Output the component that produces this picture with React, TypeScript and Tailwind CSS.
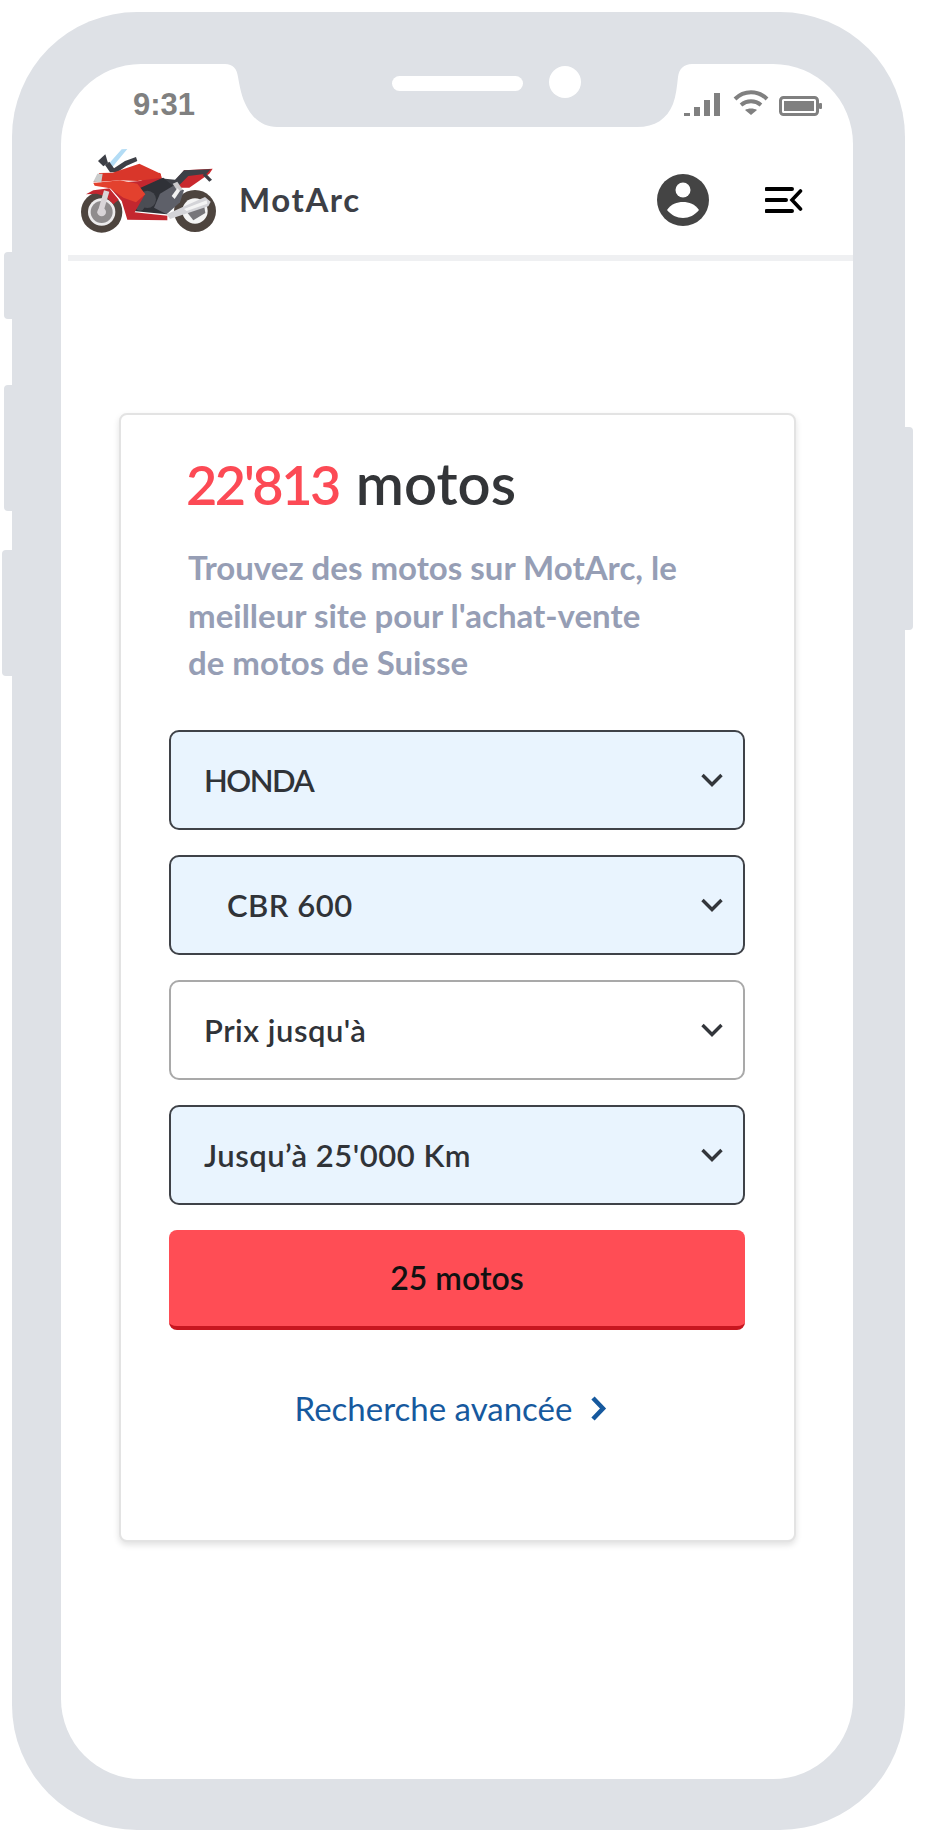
// Phone mockup: MotArc motorcycle search
import React from 'react';

const Chevron: React.FC = () => (
  <svg className="w-[24px] h-[16px] shrink-0" viewBox="0 0 24 16" fill="none">
    <path d="M2.5 3 L12 12.5 L21.5 3" stroke="#33363b" strokeWidth="3.4" />
  </svg>
);

const BikeLogo: React.FC = () => (
  <svg className="w-[137px] h-[87px] shrink-0 mb-[22px]" viewBox="60 45 411 261">
    {/* rear wheel */}
    <circle cx="405" cy="240" r="63" fill="#4d443e" />
    <circle cx="405" cy="240" r="38" fill="#f4f4f4" />
    <path d="M378 240 L432 222 L436 246 L400 268 Z" fill="#77767a" />
    {/* front wheel */}
    <circle cx="125" cy="243" r="62" fill="#4d443e" />
    <circle cx="125" cy="243" r="41" fill="#ecebec" />
    <circle cx="125" cy="243" r="33" fill="#8f8c8d" />
    <circle cx="125" cy="243" r="13" fill="#d8d4d7" />
    {/* tail and seat */}
    <path d="M352 142 L372 118 L458 113 L448 128 L388 170 L352 170 Z" fill="#c9282e" />
    <path d="M300 142 L345 146 L372 118 L452 115 L440 128 L385 135 L350 170 L295 170 Z" fill="#3d3f46" />
    <path d="M436 126 L456 146 L448 152 L428 132 Z" fill="#3d3f46" />
    {/* engine block */}
    <path d="M225 160 L310 140 L345 170 L320 250 L220 240 Z" fill="#2f3137" />
    <circle cx="262" cy="205" r="26" fill="#4b4d54" />
    <circle cx="240" cy="225" r="14" fill="#4b4d54" />
    {/* handle bars and mirror */}
    <path d="M145 100 L185 55 L202 54 L172 90 L150 118 Z" fill="#b3dcf5" />
    <path d="M114 90 L136 70 L144 96 L130 106 Z" fill="#3d3f46" />
    <path d="M135 102 L148 92 L162 112 L195 90 L228 78 L232 90 L200 104 L172 124 L150 124 Z" fill="#3d3f46" />
    {/* lower fairing */}
    <path d="M104 160 L240 150 L300 125 L305 142 L232 175 L255 190 L224 244 L322 254 L322 268 L202 266 L185 210 L150 170 Z" fill="#c3272f" />
    {/* front fender */}
    <path d="M78 190 L100 178 L148 172 L176 206 L160 220 L136 196 L110 188 Z" fill="#c3272f" />
    {/* upper fairing */}
    <path d="M100 154 L118 126 L158 125 L238 98 L302 128 L305 140 L232 150 L180 148 Z" fill="#d9362a" />
    <path d="M100 156 L180 148 L232 158 L256 190 L228 214 L190 200 L150 172 L104 164 Z" fill="#e3412e" />
    <path d="M100 152 L112 128 L128 128 L124 154 Z" fill="#c9cbcb" />
    {/* fork */}
    <path d="M132 178 L148 182 L128 250 L112 246 Z" fill="#d9d5d8" />
    {/* swing arm and exhaust */}
    <path d="M282 230 L300 188 L340 164 L372 178 L360 214 L320 250 Z" fill="#5e6069" />
    <path d="M338 158 L352 152 L368 176 L354 182 Z" fill="#c9c9cc" />
    <path d="M335 195 L352 172 L360 180 L344 204 Z" fill="#f2f2f2" />
    <path d="M320 250 L435 198 L452 212 L445 226 L330 264 Z" fill="#d4d4d8" />
    <path d="M372 234 L440 208 L442 218 L380 240 Z" fill="#f4f4f4" />
  </svg>
);

const FieldRow: React.FC<{ label: string; active?: boolean; indent?: boolean; tight?: boolean }> = ({
  label,
  active,
  indent,
  tight,
}) => (
  <div
    className={`flex items-center justify-between h-[100px] rounded-[10px] border-2 pr-[19px] ${
      active ? 'bg-[#e9f4fe] border-[#3f4248]' : 'bg-white border-[#a9a9a9]'
    } ${indent ? 'pl-[56px]' : 'pl-[33px]'}`}
  >
    <span className={`text-[31px] font-semibold text-[#303338] ${tight ? 'tracking-[-1.5px]' : 'tracking-[0.5px]'}`}>
      {label}
    </span>
    <Chevron />
  </div>
);

const App: React.FC = () => {
  return (
    <div className="w-[925px] h-[1843px] bg-white pl-[12px] pt-[12px] font-['Lato',sans-serif]">
      <div className="relative w-[893px] h-[1818px] rounded-[125px] bg-[#dee1e6] pl-[49px] pr-[52px] pt-[52px] pb-[51px]">
        {/* side buttons */}
        <div className="absolute left-[-8px] top-[240px] w-[10px] h-[67px] rounded-l-[4px] bg-[#dee1e6]" />
        <div className="absolute left-[-8px] top-[373px] w-[10px] h-[126px] rounded-l-[4px] bg-[#dee1e6]" />
        <div className="absolute left-[-10px] top-[538px] w-[12px] h-[126px] rounded-l-[4px] bg-[#dee1e6]" />
        <div className="absolute right-[-8px] top-[415px] w-[10px] h-[203px] rounded-r-[4px] bg-[#dee1e6]" />

        <div className="relative h-full rounded-[80px] bg-white overflow-hidden">
          {/* notch */}
          <svg className="absolute left-[160px] top-0 w-[480px] h-[64px]" viewBox="0 0 480 64">
            <path
              d="M4 0 C12 0 16 5 17 13 C20 30 22 36 27 45 C34 57 44 63 56 63 L416 63 C434 63 446 55 452 40 C455 32 456 22 457 13 C458 5 463 0 471 0 Z"
              fill="#dee1e6"
            />
            <rect x="171" y="12" width="131" height="15" rx="7.5" fill="#fff" />
            <circle cx="344" cy="18" r="16" fill="#fff" />
          </svg>

          {/* status bar */}
          <div className="flex items-start justify-between h-[81px] pl-[72px] pr-[31px] pt-[24px]">
            <span className="text-[31px] leading-[34px] font-bold font-['Liberation_Sans',sans-serif] text-[#808080]">9:31</span>
            <div className="flex items-end gap-[13px] pt-[2px]">
              <svg className="w-[36px] h-[23px]" viewBox="0 0 36 23" fill="#808080">
                <rect x="0" y="20" width="6" height="3" />
                <rect x="10" y="14" width="6" height="9" />
                <rect x="20" y="7" width="6" height="16" />
                <rect x="30" y="0" width="6" height="23" />
              </svg>
              <svg className="w-[36px] h-[26px]" viewBox="0 0 36 26" fill="none" stroke="#808080" strokeWidth="4">
                <path d="M2 9 C11 0 25 0 34 9" />
                <path d="M8 15 C14 10 22 10 28 15" />
                <path d="M18 25 L12 20 C15 18 21 18 24 20 Z" fill="#808080" stroke="none" />
              </svg>
              <svg className="w-[43px] h-[20px] -ml-[3px]" viewBox="0 0 43 20" fill="none">
                <rect x="1.5" y="1.5" width="37" height="17" rx="3" stroke="#808080" strokeWidth="3" />
                <rect x="5" y="5" width="30" height="10" fill="#808080" />
                <rect x="40" y="7" width="3" height="6" rx="1" fill="#808080" />
              </svg>
            </div>
          </div>

          {/* header */}
          <div className="flex items-center h-[110px] pl-[19px] pr-[50px]">
            <BikeLogo />
            <span className="ml-[22px] text-[33px] font-bold tracking-[1.6px] text-[#3d3f46]">MotArc</span>
            <svg className="ml-auto w-[52px] h-[52px]" viewBox="0 0 52 52">
              <circle cx="26" cy="26" r="26" fill="#444" />
              <circle cx="26" cy="16" r="7.5" fill="#fff" />
              <path d="M10 36 C14 30 20 28 26 28 C32 28 38 30 42 36 C38 41 32 44 26 44 C20 44 14 41 10 36 Z" fill="#fff" />
            </svg>
            <svg className="ml-[56px] w-[38px] h-[26px]" viewBox="0 0 38 26" fill="none" stroke="#000" strokeLinecap="round">
              <path d="M1.5 2 H27 M1.5 13 H21 M1.5 24 H27" strokeWidth="4" />
              <path d="M35.5 4 L27 13 L35.5 22" strokeWidth="3.6" />
            </svg>
          </div>

          <div className="ml-[7px] h-[6px] bg-[#eff0f2]" />

          {/* search card */}
          <div className="mt-[152px] ml-[58px] mr-[57px] h-[1129px] rounded-[8px] border-2 border-[#e3e3e3] bg-white shadow-[0_3px_6px_rgba(0,0,0,0.12)] pl-[48px] pr-[49px] pt-[34px]">
            <h1 className="pl-[17px] h-[68px] leading-[68px] font-semibold text-[#333538]">
              <span className="text-[54px] tracking-[-2.5px] text-[#fc4a55]">22'813</span>
              <span className="ml-[17px] text-[58px]">motos</span>
            </h1>
            <p className="mt-[27px] pl-[19px] text-[33px] leading-[47.5px] font-bold text-[#969eb5]">
              Trouvez des motos sur MotArc, le
              <br />
              meilleur site pour l'achat-vente
              <br />
              de motos de Suisse
            </p>
            <div className="mt-[43.5px] flex flex-col gap-[25px]">
              <FieldRow label="HONDA" active tight />
              <FieldRow label="CBR 600" active indent />
              <FieldRow label="Prix jusqu'à" />
              <FieldRow label="Jusqu’à 25'000 Km" active />
              <button className="h-[100px] rounded-[8px] bg-[#ff4d55] border-b-4 border-[#c8161f] text-[32px] font-semibold text-[#111]">
                25 motos
              </button>
            </div>
            <a className="mt-[59px] flex items-center justify-center gap-[18px] pr-[12px] text-[33px] leading-[38px] text-[#16599e]">
              Recherche avancée
              <svg className="w-[17px] h-[27px]" viewBox="0 0 17 27" fill="none">
                <path d="M3 3 L13 13.5 L3 24" stroke="#16599e" strokeWidth="4.5" />
              </svg>
            </a>
          </div>
        </div>
      </div>
    </div>
  );
};

export default App;
